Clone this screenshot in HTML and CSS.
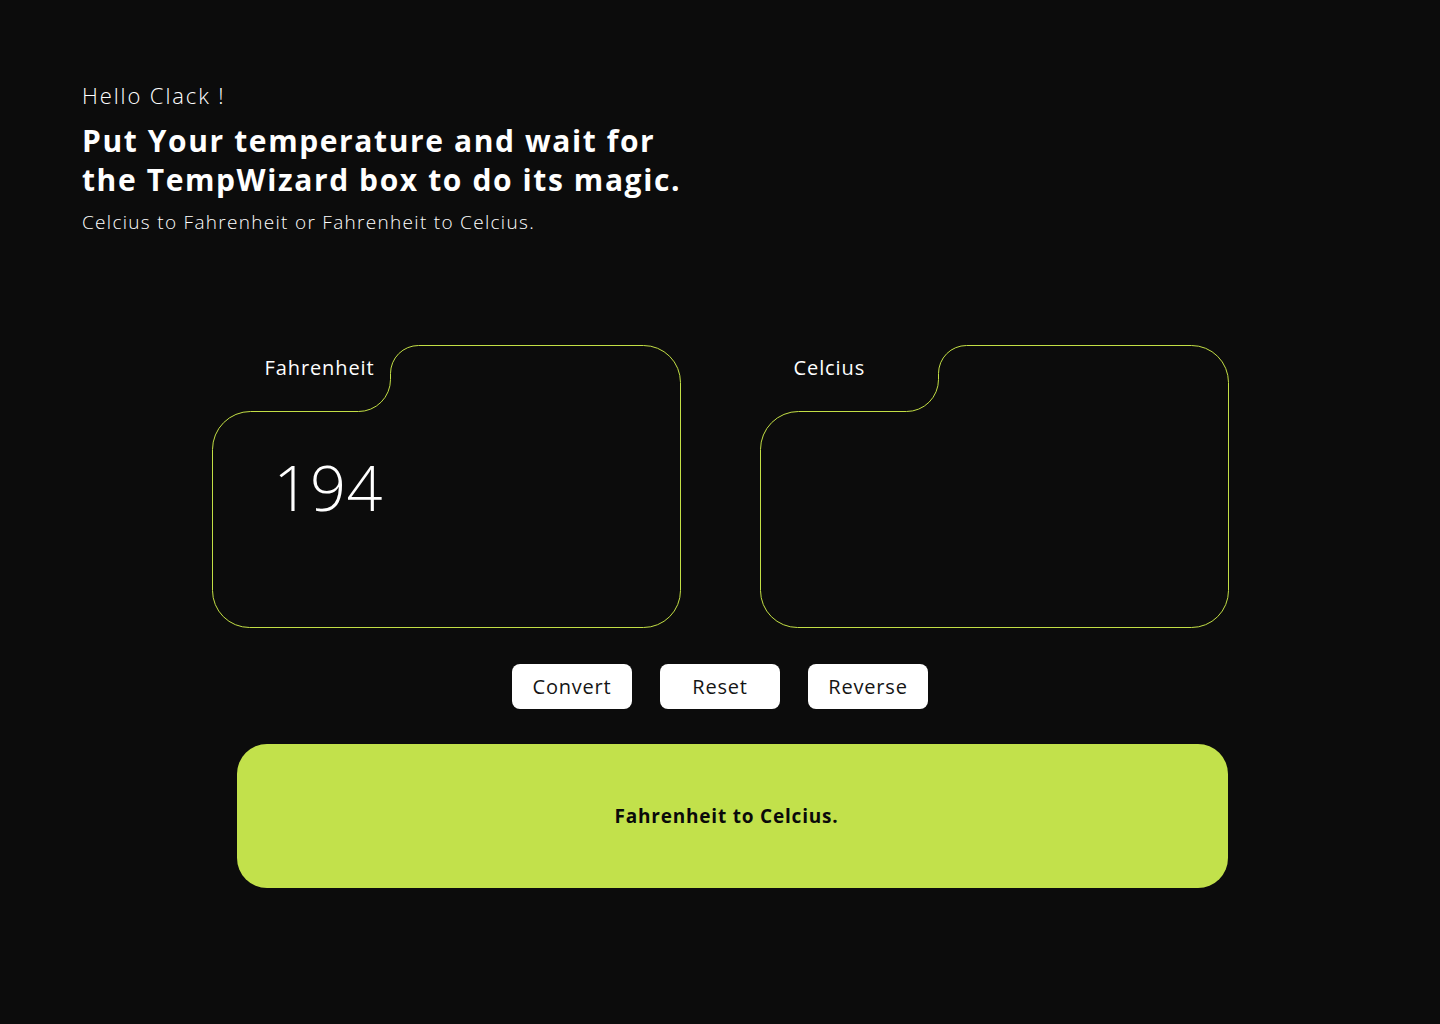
FILE: index.html
```html
<!DOCTYPE html>
<html lang="en">
<head>
<meta charset="utf-8">
<title>TempWizard</title>
<link rel="stylesheet" href="styles.css">
</head>
<body>
<main class="page">
  <header class="intro">
    <p class="greeting">Hello Clack !</p>
    <h1 class="title">Put Your temperature and wait for<br>the TempWizard box to do its magic.</h1>
    <p class="subtitle">Celcius to Fahrenheit or Fahrenheit to Celcius.</p>
  </header>

  <section class="converter">
    <div class="cards">
      <div class="card">
        <svg class="card-shape" width="469" height="283" viewBox="0 0 469 283" aria-hidden="true">
          <path d="M38.5 66.5 H146.5 A32 32 0 0 0 178.5 34.5 V28.5 A28 28 0 0 1 206.5 0.5 H431.5 A37 37 0 0 1 468.5 37.5 V245.5 A37 37 0 0 1 431.5 282.5 H37.5 A37 37 0 0 1 0.5 245.5 V104.5 A38 38 0 0 1 38.5 66.5 Z" fill="none" stroke="#c3df45" stroke-width="1"/>
        </svg>
        <span class="card-label card-label--f">Fahrenheit</span>
        <span class="card-value">194</span>
      </div>
      <div class="card">
        <svg class="card-shape" width="469" height="283" viewBox="0 0 469 283" aria-hidden="true">
          <path d="M38.5 66.5 H146.5 A32 32 0 0 0 178.5 34.5 V28.5 A28 28 0 0 1 206.5 0.5 H431.5 A37 37 0 0 1 468.5 37.5 V245.5 A37 37 0 0 1 431.5 282.5 H37.5 A37 37 0 0 1 0.5 245.5 V104.5 A38 38 0 0 1 38.5 66.5 Z" fill="none" stroke="#c3df45" stroke-width="1"/>
        </svg>
        <span class="card-label card-label--c">Celcius</span>
        <span class="card-value"></span>
      </div>
    </div>

    <div class="actions">
      <button class="btn" type="button">Convert</button>
      <button class="btn" type="button">Reset</button>
      <button class="btn" type="button">Reverse</button>
    </div>

    <div class="result">Fahrenheit to Celcius.</div>
  </section>
</main>
</body>
</html>
```

FILE: styles.css
```css
* { box-sizing: border-box; }

html, body {
  margin: 0;
  padding: 0;
  background: #0c0c0c;
}

body {
  font-family: "Open Sans", "Noto Sans", sans-serif;
  color: #ffffff;
}

.page {
  width: 1440px;
  min-height: 1024px;
}

.intro {
  padding: 80px 0 0 82px;
}

.greeting {
  margin: 0;
  font-size: 22px;
  line-height: 30px;
  font-weight: 300;
  letter-spacing: 1.9px;
}

.title {
  margin: 11px 0 0;
  font-size: 30px;
  line-height: 39px;
  font-weight: 700;
  letter-spacing: 1.6px;
}

.subtitle {
  margin: 10px 0 0;
  font-size: 19px;
  line-height: 26px;
  font-weight: 300;
  letter-spacing: 1.3px;
}

.converter {
  margin-top: 110px;
}

.cards {
  display: flex;
  justify-content: center;
  gap: 79px;
}

.card {
  position: relative;
  width: 469px;
  height: 283px;
  display: flex;
  flex-direction: column;
}

.card-shape {
  position: absolute;
  top: 0;
  left: 0;
}

.card-label {
  position: relative;
  padding-top: 9px;
  font-size: 20px;
  line-height: 28px;
  font-weight: 400;
  letter-spacing: 0.9px;
}

.card-label--f { padding-left: 53px; }
.card-label--c { padding-left: 34px; }

.card-value {
  position: relative;
  margin-top: 65px;
  padding-left: 62px;
  font-size: 63px;
  line-height: 80px;
  font-weight: 300;
  letter-spacing: 0.5px;
}

.actions {
  display: flex;
  justify-content: center;
  gap: 28px;
  margin-top: 36px;
}

.btn {
  width: 120px;
  height: 45px;
  border: none;
  border-radius: 8px;
  background: #ffffff;
  color: #151515;
  font-family: inherit;
  font-size: 20px;
  font-weight: 400;
  letter-spacing: 0.8px;
  padding: 0;
}

.result {
  margin: 35px 0 0 237px;
  width: 991px;
  height: 144px;
  border-radius: 30px;
  background: #c2e14b;
  color: #0a0a0a;
  display: flex;
  align-items: center;
  justify-content: center;
  font-size: 19px;
  font-weight: 700;
  letter-spacing: 0.8px;
  padding-right: 12px;
}
```
